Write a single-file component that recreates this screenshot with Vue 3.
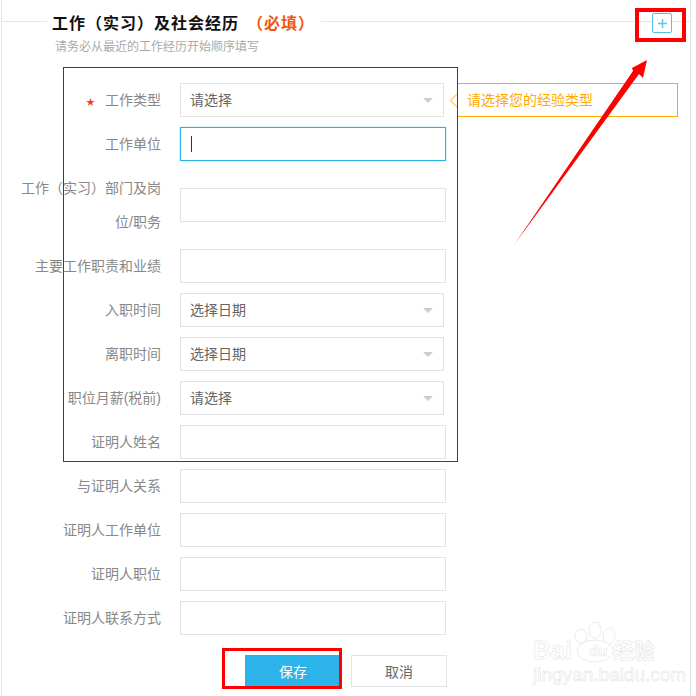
<template>
  <div class="page">
    <div class="frame">
      <!-- heading -->
      <div class="head">
        <span class="head-line short"></span>
        <h2 class="title">工作（实习）及社会经历<em>（必填）</em></h2>
        <span class="head-line"></span>
      </div>
      <p class="sub">请务必从最近的工作经历开始顺序填写</p>

      <button class="add" type="button" aria-label="添加">
        <svg width="11" height="11" viewBox="0 0 11 11"><path d="M5.5 1v9M1 5.5h9" stroke="#62c4ee" stroke-width="1.5" fill="none" /></svg>
      </button>

      <!-- form -->
      <div class="form">
        <div v-for="row in rows" :key="row.label" class="row">
          <label class="label">
            <i v-if="row.required" class="star">★</i>{{ row.label }}
          </label>
          <div v-if="row.select" class="field select">
            {{ row.select }}
            <span class="caret"></span>
          </div>
          <div v-else class="field" :class="{ focus: row.focus }">
            <span v-if="row.focus" class="cursor"></span>
          </div>
          <div v-if="row.required" class="tip">请选择您的经验类型</div>
        </div>
        <div class="actions">
          <button class="btn primary" type="button">保存</button>
          <button class="btn" type="button">取消</button>
        </div>
      </div>
    </div>

    <!-- annotations drawn over the screenshot -->
    <div class="mark-form"></div>
    <div class="mark-add"></div>
    <div class="mark-save"></div>
    <svg class="arrow" width="696" height="696" viewBox="0 0 696 696">
      <polygon points="514,245 633,71 632,68 647,60 643,78 639,74" fill="#f00" />
    </svg>

    <!-- watermark -->
    <div class="wm">
      <svg class="paw" width="60" height="50" viewBox="0 0 60 50">
        <g fill="#fff" stroke="#ececec" stroke-width="1">
          <ellipse cx="11" cy="15" rx="6" ry="7" />
          <ellipse cx="25" cy="9" rx="6" ry="8" />
          <ellipse cx="39" cy="15" rx="6" ry="8" />
          <ellipse cx="25" cy="30" rx="18" ry="11" />
        </g>
      </svg>
      <span class="wm-bai">Bai</span>
      <span class="wm-du">du</span>
      <span class="wm-cn">经验</span>
      <span class="wm-url">jingyan.baidu.com</span>
    </div>
  </div>
</template>

<script setup>
const rows = [
  { label: '工作类型', select: '请选择', required: true },
  { label: '工作单位', focus: true },
  { label: '工作（实习）部门及岗位/职务' },
  { label: '主要工作职责和业绩' },
  { label: '入职时间', select: '选择日期' },
  { label: '离职时间', select: '选择日期' },
  { label: '职位月薪(税前)', select: '请选择' },
  { label: '证明人姓名' },
  { label: '与证明人关系' },
  { label: '证明人工作单位' },
  { label: '证明人职位' },
  { label: '证明人联系方式' }
]
</script>

<style>
html, body {
  margin: 0;
  background: #fff;
}
</style>

<style scoped>
.page {
  position: relative;
  width: 696px;
  height: 696px;
  overflow: hidden;
  background: #fff;
  font-family: "Liberation Sans", "Noto Sans CJK SC", sans-serif;
}

.frame {
  position: relative;
  box-sizing: border-box;
  width: 690px;
  height: 696px;
  margin-left: 1px;
  border-left: 1px solid #e5e5e5;
  border-right: 1px solid #e5e5e5;
}

.head {
  display: flex;
  align-items: center;
  height: 42px;
}

.head-line {
  flex: 1;
  height: 1px;
  margin-left: 6px;
  background: #e5e5e5;
}

.head-line.short {
  flex: none;
  width: 45px;
  margin: 0 5px 0 0;
}

.title {
  margin: 2px 0 0;
  font-size: 16px;
  letter-spacing: 1px;
  font-weight: bold;
  color: #111;
  white-space: nowrap;
}

.title em {
  margin-left: 8px;
  font-style: normal;
  color: #f4550f;
}

.sub {
  margin: -3px 0 0 53px;
  font-size: 12px;
  line-height: 16px;
  color: #aaa;
}

.add {
  position: absolute;
  top: 13px;
  left: 650px;
  display: flex;
  align-items: center;
  justify-content: center;
  box-sizing: border-box;
  width: 20px;
  height: 20px;
  padding: 0;
  background: #fff;
  border: 1px solid #55c0ee;
  border-radius: 2px;
}

.form {
  margin-top: 28px;
}

.row {
  position: relative;
  display: flex;
  align-items: center;
  margin-bottom: 10px;
}

.label {
  box-sizing: border-box;
  width: 140px;
  margin: 0 19px 0 19px;
  font-size: 14px;
  line-height: 34px;
  color: #888;
  text-align: right;
}

.star {
  margin-right: 10px;
  font-style: normal;
  font-size: 9px;
  line-height: 0;
  color: #f4402a;
}

.field {
  position: relative;
  box-sizing: border-box;
  width: 266px;
  height: 34px;
  border: 1px solid #e3e3e3;
}

.field.focus {
  border-color: #2db0e8;
  box-shadow: 0 0 2px #a8def5;
}

.cursor {
  position: absolute;
  top: 8px;
  left: 10px;
  width: 1px;
  height: 16px;
  background: #333;
}

.select {
  width: 264px;
  padding-left: 9px;
  font-size: 14px;
  line-height: 32px;
  color: #666;
}

.caret {
  position: absolute;
  top: 14px;
  right: 10px;
  border-top: 5px solid #ccc;
  border-left: 5px solid transparent;
  border-right: 5px solid transparent;
}

.tip {
  position: absolute;
  top: 0;
  left: 455px;
  box-sizing: border-box;
  width: 221px;
  height: 34px;
  padding-left: 9px;
  font-size: 14px;
  line-height: 32px;
  color: #fa0;
  border: 1px solid #fa0;
  background: #fff;
}

.tip::before {
  content: "";
  position: absolute;
  top: 11px;
  left: -6px;
  width: 10px;
  height: 10px;
  background: #fff;
  border-left: 1px solid #fcc25c;
  border-bottom: 1px solid #fcc25c;
  transform: rotate(45deg);
}

.actions {
  display: flex;
  gap: 10px;
  margin: 20px 0 0 243px;
}

.btn {
  box-sizing: border-box;
  width: 96px;
  height: 32px;
  padding: 0;
  font-family: inherit;
  font-size: 14px;
  color: #666;
  background: #fff;
  border: 1px solid #e3e3e3;
}

.btn.primary {
  color: #fff;
  background: #2bb3ea;
  border-color: #2bb3ea;
}

.mark-form {
  position: absolute;
  top: 67px;
  left: 63px;
  box-sizing: border-box;
  width: 395px;
  height: 395px;
  border: 1px solid #d40000;
}

.mark-add {
  position: absolute;
  top: 8px;
  left: 635px;
  box-sizing: border-box;
  width: 51px;
  height: 34px;
  border: 4px solid #f00;
}

.mark-save {
  position: absolute;
  top: 648px;
  left: 222px;
  box-sizing: border-box;
  width: 120px;
  height: 41px;
  border: 3px solid #f00;
}

.arrow {
  position: absolute;
  top: 0;
  left: 0;
  pointer-events: none;
}

.wm {
  position: absolute;
  top: 620px;
  left: 530px;
  width: 140px;
  height: 66px;
  color: #fff;
  -webkit-text-stroke: 0.5px #e2e2e2;
}

.paw {
  position: absolute;
  top: 1px;
  left: 40px;
}

.wm-bai,
.wm-du,
.wm-cn,
.wm-url {
  position: absolute;
  white-space: nowrap;
}

.wm-bai {
  top: 15px;
  left: 3px;
  font-size: 25px;
  line-height: 30px;
  font-weight: bold;
}

.wm-du {
  top: 22px;
  left: 59px;
  font-size: 15px;
  line-height: 18px;
  font-weight: bold;
}

.wm-cn {
  top: 19px;
  left: 83px;
  font-size: 21px;
  line-height: 24px;
  font-weight: bold;
}

.wm-url {
  top: 45px;
  left: 3px;
  font-size: 19px;
  line-height: 20px;
}
</style>
